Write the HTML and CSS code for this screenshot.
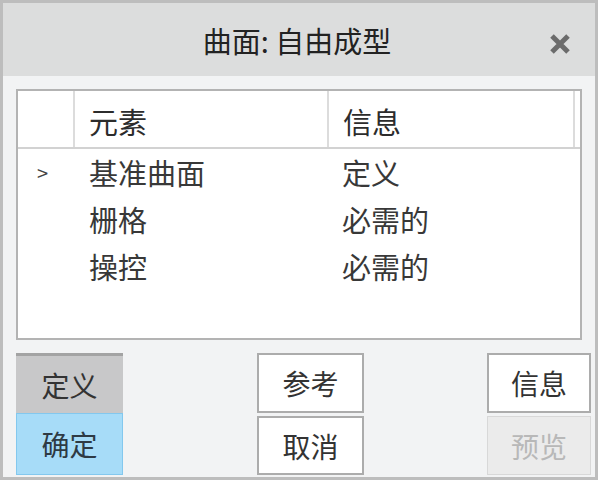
FILE: index.html
```html
<!DOCTYPE html>
<html lang="zh">
<head>
<meta charset="utf-8">
<link rel="stylesheet" href="styles.css">
</head>
<body>
<div class="window">
  <div class="titlebar">
    <div class="title">曲面: 自由成型</div>
    <div class="close">
      <svg width="22" height="22" viewBox="0 0 22 22"><path d="M3 3 L19 19 M19 3 L3 19" stroke="#6b6b6b" stroke-width="5" stroke-linecap="butt"/></svg>
    </div>
  </div>
  <div class="content">
    <div class="list">
      <div class="row head">
        <div class="c0"></div>
        <div class="c1">元素</div>
        <div class="c2">信息</div>
        <div class="c3"></div>
      </div>
      <div class="row">
        <div class="c0 mark">&gt;</div>
        <div class="c1">基准曲面</div>
        <div class="c2">定义</div>
      </div>
      <div class="row">
        <div class="c0"></div>
        <div class="c1">栅格</div>
        <div class="c2">必需的</div>
      </div>
      <div class="row">
        <div class="c0"></div>
        <div class="c1">操控</div>
        <div class="c2">必需的</div>
      </div>
    </div>
    <div class="buttons">
      <div class="bgroup">
        <div class="btn btn-define">定义</div>
        <div class="btn btn-ok">确定</div>
      </div>
      <div></div>
      <div class="bgroup gap">
        <div class="btn btn-plain">参考</div>
        <div class="btn btn-plain low">取消</div>
      </div>
      <div></div>
      <div class="bgroup gap">
        <div class="btn btn-plain">信息</div>
        <div class="btn btn-disabled low">预览</div>
      </div>
    </div>
  </div>
</div>
</body>
</html>
```

FILE: styles.css
```css
* { box-sizing: border-box; }
html, body { margin: 0; padding: 0; background: #f2f3f4; }
body {
  font-family: "Noto Sans CJK SC", "Noto Sans", sans-serif;
  color: #333;
}
.window {
  width: 598px;
  height: 480px;
  border: 3px solid #bdbdbd;
  background: #f2f3f4;
  display: flex;
  flex-direction: column;
  overflow: hidden;
}
.titlebar {
  height: 73px;
  background: #dcdddd;
  display: flex;
  align-items: center;
  justify-content: center;
  position: relative;
}
.title {
  font-size: 29px;
  color: #222;
  line-height: 1;
  margin-left: -4px;
  margin-top: 2px;
}
.close {
  position: absolute;
  right: 24px;
  top: 30px;
  width: 22px;
  height: 22px;
}
.close svg { display: block; }
.content {
  flex: 1;
  padding: 13px 4px 2px 13px;
  display: flex;
  flex-direction: column;
}
.list {
  width: 566px;
  height: 251px;
  border: 2px solid #b3b3b3;
  background: #fff;
  margin-bottom: 13px;
}
.row {
  display: grid;
  grid-template-columns: 57px 254px 246px 1fr;
  height: 47px;
  align-items: center;
  font-size: 29px;
  line-height: 1;
  color: #383838;
}
.row.head {
  height: 58px;
  border-bottom: 2px solid #d2d2d2;
  align-items: stretch;
}
.row.head > div {
  display: flex;
  align-items: center;
  padding-top: 4px;
}
.row.head .c0, .row.head .c1, .row.head .c2 {
  border-right: 2px solid #dcdcdc;
}
.row.head .c1 { padding-left: 14px; }
.row.head .c2 { padding-left: 14px; }
.row.head { color: #2c2c2c; }
.c1 { padding-left: 14px; }
.c2 { padding-left: 13px; }
.mark {
  font-size: 20px;
  padding-left: 19px;
  color: #444;
}
.buttons {
  display: grid;
  grid-template-columns: 107px 134px 107px 123px 104px;
}
.bgroup {
  display: flex;
  flex-direction: column;
}
.bgroup.gap { gap: 3px; }
.btn {
  display: flex;
  align-items: center;
  justify-content: center;
  font-size: 28px;
  line-height: 1;
  color: #333;
}
.btn-define {
  height: 60px;
  background: #c8c8c9;
  border-top: 3px solid #a3a3a3;
}
.btn-ok {
  height: 62px;
  background: #a7dcf8;
  border: 1px solid #83c8ee;
  color: #2e3a44;
}
.btn-plain {
  height: 60px;
  background: #fff;
  border: 2px solid #acacac;
}
.btn-plain.low { height: 59px; }
.btn-disabled {
  height: 59px;
  background: #ebebeb;
  border: 1px solid #d8d8d8;
  color: #b8b8b8;
}
```
